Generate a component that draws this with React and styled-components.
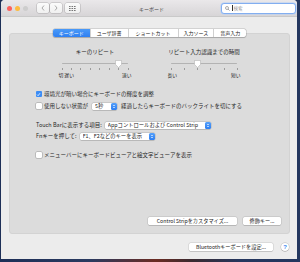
import React from 'react'
import styled, { createGlobalStyle } from 'styled-components'

const GlobalStyle = createGlobalStyle`
    html, body {
        margin: 0;
        width: 300px;
        height: 262px;
        overflow: hidden;
    }
    body {
        background: linear-gradient(to right, #1d2f57 0%, #2a3a60 30%, #6b2b22 52%, #3a2a30 64%, #24365e 80%, #24375f 100%);
        font-family: "Noto Sans CJK JP", "Noto Sans", sans-serif;
        color: #262626;
    }
`

const Window = styled.div`
    margin-left: 1px;
    width: 296px;
    height: 259px;
    background: #ececec;
    border-radius: 4px 4px 0 0;
    display: flex;
    flex-direction: column;
    overflow: hidden;
`

const TitleBar = styled.div`
    height: 16px;
    flex-shrink: 0;
    border-bottom: 1px solid #c9c9c9;
    background: linear-gradient(#eae8ea, #d7d5d7);
    display: grid;
    grid-template-columns: 1fr auto 1fr;
    align-items: center;
    padding: 0 1px 0 6px;
`

const Controls = styled.div`
    display: flex;
    align-items: center;
`

const Light = styled.span`
    width: 5px;
    height: 5px;
    border-radius: 50%;
    background: ${p => p.color};
    margin-right: 3px;
`

const NavGroup = styled.div`
    display: flex;
    gap: 1px;
    margin-left: 6px;
`

const NavButton = styled.div`
    width: ${p => p.w || 12}px;
    height: 10px;
    margin-left: ${p => p.ml || 0}px;
    background: linear-gradient(#fbfbfb, #f0f0f0);
    border-radius: 2px;
    box-shadow: 0 0 0 0.5px rgba(0, 0, 0, 0.22);
    display: flex;
    align-items: center;
    justify-content: center;
`

const Title = styled.div`
    font-size: 5px;
    color: #4a4a4a;
    line-height: 1;
`

const Search = styled.div`
    justify-self: end;
    width: 70px;
    height: 9px;
    border: 1px solid #82aef0;
    box-shadow: 0 0 0 0.5px #b5cff5;
    border-radius: 3px;
    background: #fff;
    display: flex;
    align-items: center;
    gap: 1px;
    padding-left: 3px;
    font-size: 4.5px;
    color: #9a9a9a;
`

const Caret = styled.span`
    width: 0.5px;
    height: 6px;
    background: #333;
    margin-left: 1px;
`

const Body = styled.div`
    flex: 1;
    display: flex;
    flex-direction: column;
    padding: 12px 7px 0 8px;
`

const Tabs = styled.div`
    align-self: center;
    display: flex;
    height: 8px;
    margin-bottom: -4px;
    position: relative;
    z-index: 1;
    background: #fff;
    border-radius: 2px;
    box-shadow: 0 0 0 0.5px rgba(0, 0, 0, 0.2), 0 0.5px 1px rgba(0, 0, 0, 0.15);
`

const Tab = styled.div`
    padding: 0 ${p => p.px || 6}px;
    font-size: 5px;
    line-height: 8px;
    color: ${p => (p.active ? '#fff' : '#222')};
    background: ${p => (p.active ? 'linear-gradient(#4a9af8, #2f80f2)' : 'transparent')};
    border-left: ${p => (p.first ? 'none' : '0.5px solid #d0d0d0')};
    border-radius: ${p => (p.active ? '2px 0 0 2px' : '0')};
    white-space: nowrap;
`

const Panel = styled.div`
    height: 201px;
    box-sizing: border-box;
    background: #dcdcdc;
    border: 1px solid #d3d3d3;
    border-radius: 3px;
    display: flex;
    flex-direction: column;
    padding: 15px 0 8px 0;
`

const SliderRow = styled.div`
    display: flex;
    justify-content: center;
    gap: 19px;
`

const SliderColumn = styled.div`
    width: 90px;
    display: flex;
    flex-direction: column;
    align-items: center;
`

const Heading = styled.div`
    font-size: 5.5px;
    line-height: 7px;
    white-space: nowrap;
`

const Track = styled.div`
    width: 66px;
    height: 7px;
    margin-top: 4px;
    position: relative;
    display: flex;
    align-items: center;

    &::before {
        content: '';
        flex: 1;
        height: 1px;
        background: #b3b3b3;
        border-radius: 1px;
    }
`

const Thumb = styled.svg`
    position: absolute;
    top: -0.5px;
    width: 7px;
    height: 8px;
    margin-left: -3.5px;
    filter: drop-shadow(0 0.5px 0.5px rgba(0, 0, 0, 0.3));
`

const Ticks = styled.div`
    width: 67px;
    height: 2px;
    margin-top: 1px;
    display: flex;
    justify-content: space-between;
`

const Tick = styled.span`
    width: 0.7px;
    height: 2px;
    background: #9c9c9c;
`

const Scale = styled.div`
    width: 73px;
    margin-top: 2px;
    display: flex;
    justify-content: space-between;
    font-size: 4.8px;
    line-height: 6px;
    white-space: nowrap;
`

const Options = styled.div`
    padding-left: 26px;
    display: flex;
    flex-direction: column;
`

const Row = styled.div`
    display: flex;
    align-items: center;
    height: 8px;
    margin-top: ${p => p.mt || 0}px;
    font-size: 5.5px;
    white-space: nowrap;
`

const Box = styled.span`
    width: 5.5px;
    height: 5.5px;
    margin-right: 2.5px;
    flex-shrink: 0;
    border-radius: 1px;
    background: ${p => (p.checked ? '#3b8cf5' : '#fff')};
    box-shadow: ${p => (p.checked ? 'none' : '0 0 0 0.5px rgba(0, 0, 0, 0.3)')};
    display: flex;
    align-items: center;
    justify-content: center;
`

const Popup = styled.div`
    width: ${p => p.w}px;
    height: 7px;
    margin: 0 ${p => p.mr || 0}px 0 ${p => p.ml || 0}px;
    box-sizing: border-box;
    background: #fff;
    border-radius: 1.5px;
    box-shadow: 0 0 0 0.5px rgba(0, 0, 0, 0.18), 0 0.5px 0.5px rgba(0, 0, 0, 0.15);
    display: flex;
    align-items: center;
    padding-left: 3px;
    font-size: 5.3px;
`

const PopupText = styled.span`
    flex: 1;
    overflow: hidden;
`

const Stepper = styled.span`
    width: 6px;
    height: 7px;
    border-radius: 1.5px;
    background: linear-gradient(#55a0fa, #2e7ff2);
    display: flex;
    align-items: center;
    justify-content: center;
`

const ButtonRow = styled.div`
    margin-top: auto;
    display: flex;
    justify-content: flex-end;
    gap: 6px;
    padding-right: 8px;
`

const Button = styled.div`
    width: ${p => p.w}px;
    height: 8px;
    background: #fff;
    border-radius: 1.5px;
    box-shadow: 0 0 0 0.5px rgba(0, 0, 0, 0.15), 0 0.5px 0.5px rgba(0, 0, 0, 0.2);
    font-size: 5.2px;
    line-height: 8px;
    text-align: center;
    white-space: nowrap;
`

const Footer = styled.div`
    margin-top: 9px;
    display: flex;
    justify-content: flex-end;
    align-items: center;
    gap: 8px;
    padding-right: 1px;
`

const Help = styled.div`
    width: 8px;
    height: 8px;
    border-radius: 50%;
    background: #fff;
    box-shadow: 0 0 0 0.5px rgba(0, 0, 0, 0.2), 0 0.5px 0.5px rgba(0, 0, 0, 0.2);
    color: #3b86ee;
    font-family: "Liberation Sans", sans-serif;
    font-weight: bold;
    font-size: 6px;
    line-height: 8px;
    text-align: center;
`

const Chevron = ({ dir }) => (
    <svg width="4" height="6" viewBox="0 0 4 6">
        <path
            d={dir === 'left' ? 'M3 0.5 L1 3 L3 5.5' : 'M1 0.5 L3 3 L1 5.5'}
            fill="none"
            stroke="#8a8a8a"
            strokeWidth="0.7"
        />
    </svg>
)

const GridIcon = () => (
    <svg width="7" height="5" viewBox="0 0 7 5">
        {[0, 2, 4].map(y =>
            [0, 2.5, 5].map(x => <rect key={`${x}-${y}`} x={x} y={y} width="1.6" height="1" fill="#777" />)
        )}
    </svg>
)

const Magnifier = () => (
    <svg width="5" height="5" viewBox="0 0 5 5">
        <circle cx="2" cy="2" r="1.5" fill="none" stroke="#777" strokeWidth="0.6" />
        <path d="M3.1 3.1 L4.6 4.6" stroke="#777" strokeWidth="0.7" />
    </svg>
)

const Check = () => (
    <svg width="5" height="5" viewBox="0 0 5 5">
        <path d="M1 2.6 L2.1 3.7 L4 1.2" fill="none" stroke="#fff" strokeWidth="0.8" />
    </svg>
)

const StepArrows = () => (
    <svg width="4" height="5" viewBox="0 0 4 5">
        <path d="M1 2 L2 1 L3 2 M1 3 L2 4 L3 3" fill="none" stroke="#fff" strokeWidth="0.6" />
    </svg>
)

const Slider = ({ title, ticks, value, low, high }) => (
    <SliderColumn>
        <Heading>{title}</Heading>
        <Track>
            <Thumb viewBox="0 0 7 8" style={{ left: `${(value / (ticks - 1)) * 100}%` }}>
                <path d="M0.5 1 Q0.5 0.5 1 0.5 L6 0.5 Q6.5 0.5 6.5 1 L6.5 4.5 L3.5 7.5 L0.5 4.5 Z" fill="#fff" stroke="#bdbdbd" strokeWidth="0.4" />
            </Thumb>
        </Track>
        <Ticks>
            {Array.from({ length: ticks }).map((_, i) => (
                <Tick key={i} />
            ))}
        </Ticks>
        <Scale>
            <span>{low}</span>
            <span>{high}</span>
        </Scale>
    </SliderColumn>
)

const tabs = [
    { label: 'キーボード', active: true },
    { label: 'ユーザ辞書' },
    { label: 'ショートカット', px: 7 },
    { label: '入力ソース', px: 5 },
    { label: '音声入力' },
]

export default function App() {
    return (
        <>
            <GlobalStyle />
            <Window>
                <TitleBar>
                    <Controls>
                        <Light color="#fc605c" />
                        <Light color="#fdbc40" />
                        <Light color="#cdcdcd" />
                        <NavGroup>
                            <NavButton>
                                <Chevron dir="left" />
                            </NavButton>
                            <NavButton>
                                <Chevron dir="right" />
                            </NavButton>
                        </NavGroup>
                        <NavButton w={15} ml={3}>
                            <GridIcon />
                        </NavButton>
                    </Controls>
                    <Title>キーボード</Title>
                    <Search>
                        <Magnifier />
                        <Caret />
                        <span>検索</span>
                    </Search>
                </TitleBar>
                <Body>
                    <Tabs>
                        {tabs.map((t, i) => (
                            <Tab key={t.label} active={t.active} first={i === 0} px={t.px}>
                                {t.label}
                            </Tab>
                        ))}
                    </Tabs>
                    <Panel>
                        <SliderRow>
                            <Slider title="キーのリピート" ticks={8} value={6} low="切 遅い" high="速い" />
                            <Slider title="リピート入力認識までの時間" ticks={6} value={2} low="長い" high="短い" />
                        </SliderRow>
                        <Options>
                            <Row mt={12}>
                                <Box checked>
                                    <Check />
                                </Box>
                                環境光が暗い場合にキーボードの輝度を調整
                            </Row>
                            <Row mt={4}>
                                <Box />
                                使用しない状態が
                                <Popup w={25} ml={4} mr={4}>
                                    <PopupText>5秒</PopupText>
                                    <Stepper>
                                        <StepArrows />
                                    </Stepper>
                                </Popup>
                                経過したらキーボードのバックライトを切にする
                            </Row>
                            <Row mt={11}>
                                Touch Barに表示する項目:
                                <Popup w={106} ml={3}>
                                    <PopupText>Appコントロールおよび Control Strip</PopupText>
                                    <Stepper>
                                        <StepArrows />
                                    </Stepper>
                                </Popup>
                            </Row>
                            <Row mt={3}>
                                Fnキーを押して:
                                <Popup w={75} ml={3}>
                                    <PopupText>F1、F2などのキーを表示</PopupText>
                                    <Stepper>
                                        <StepArrows />
                                    </Stepper>
                                </Popup>
                            </Row>
                            <Row mt={11}>
                                <Box />
                                メニューバーにキーボードビューアと絵文字ビューアを表示
                            </Row>
                        </Options>
                        <ButtonRow>
                            <Button w={89}>Control Stripをカスタマイズ...</Button>
                            <Button w={38}>修飾キー...</Button>
                        </ButtonRow>
                    </Panel>
                    <Footer>
                        <Button w={84}>Bluetoothキーボードを設定...</Button>
                        <Help>?</Help>
                    </Footer>
                </Body>
            </Window>
        </>
    )
}
